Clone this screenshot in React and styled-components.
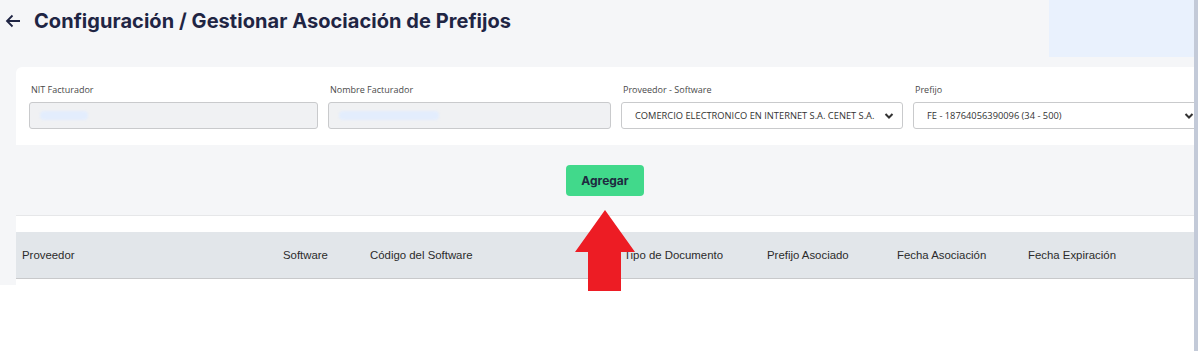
import React from "react";
import styled, { createGlobalStyle } from "styled-components";

const GlobalStyle = createGlobalStyle`
  html, body {
    margin: 0;
    padding: 0;
    background: #ffffff;
    overflow: hidden;
  }
  * {
    box-sizing: border-box;
  }
`;

const Screen = styled.div`
  display: flex;
  flex-direction: row;
  width: 1198px;
  height: 351px;
  position: relative;
`;

const Page = styled.div`
  flex: 1;
  min-width: 0;
  overflow: hidden;
`;

const Scrollbar = styled.div`
  width: 4px;
  background: #c3cad8;
`;

const Top = styled.div`
  display: flex;
  flex-direction: row;
  justify-content: space-between;
  background: #f5f6f8;
  height: 67px;
`;

const TitleRow = styled.div`
  display: flex;
  flex-direction: row;
  align-items: center;
  height: 42px;
  padding-left: 5px;
  gap: 13px;
  h1 {
    margin: 0;
    font-family: Inter, Roboto, "Liberation Sans", sans-serif;
    font-weight: 700;
    font-size: 20px;
    letter-spacing: 0.05px;
    color: #1f2544;
  }
`;

const UserBox = styled.div`
  width: 145px;
  height: 57px;
  background: #e9f1fd;
`;

const Body = styled.div`
  background: #f5f6f8;
  padding-left: 16px;
  height: 218px;
  display: flex;
  flex-direction: column;
`;

const Card = styled.div`
  background: #ffffff;
  border-top-left-radius: 6px;
  height: 78px;
  padding: 16px 0 0 13px;
  display: grid;
  grid-template-columns: 289px 283px 282px 290px;
  column-gap: 10px;
`;

const Field = styled.div`
  display: flex;
  flex-direction: column;
  gap: 6px;
  label {
    font-family: "Open Sans", "Noto Sans", sans-serif;
    font-size: 9px;
    color: #4a4a4a;
    line-height: 13px;
    padding-left: 2px;
  }
`;

const Input = styled.div`
  height: 27px;
  border: 1px solid #c9cacc;
  border-radius: 3px;
  background: ${(p) => (p.$disabled ? "#f0f1f3" : "#ffffff")};
  display: flex;
  align-items: center;
  justify-content: space-between;
  padding: 0 8px 0 13px;
  font-family: "Open Sans", "Noto Sans", sans-serif;
  font-size: 9.3px;
  color: #333333;
  white-space: nowrap;
`;

const Blur = styled.span`
  display: block;
  width: ${(p) => p.$w}px;
  height: 9px;
  margin-left: ${(p) => p.$off}px;
  background: #e3edfd;
  border-radius: 4px;
  filter: blur(1px);
`;

const Actions = styled.div`
  height: 71px;
  display: flex;
  justify-content: center;
  align-items: center;
  border-bottom: 1px solid #e6e7e9;
`;

const Button = styled.button`
  width: 78px;
  height: 31px;
  border: none;
  border-radius: 4px;
  background: #41d98b;
  color: #1e2a40;
  font-family: Inter, Roboto, "Liberation Sans", sans-serif;
  font-weight: 700;
  font-size: 12px;
  margin-top: 1px;
`;

const TableArea = styled.div`
  background: #ffffff;
  padding-top: 16px;
  flex: 1;
`;

const HeaderRow = styled.div`
  height: 47px;
  background: #e2e6ea;
  border-bottom: 1px solid #c8c9cb;
  display: flex;
  align-items: center;
  font-family: "Liberation Sans", Arial, sans-serif;
  font-size: 11.4px;
  color: #2b2b2b;
`;

const Col = styled.div`
  width: ${(p) => p.$w}px;
  flex-shrink: 0;
  white-space: nowrap;
`;

const ArrowMark = styled.svg`
  position: absolute;
  left: 574px;
  top: 210px;
`;

const Chevron = () => (
  <svg width="10" height="8" viewBox="0 0 10 8">
    <path d="M1.5 2 L5 5.5 L8.5 2" fill="none" stroke="#333" strokeWidth="2" />
  </svg>
);

const columns = [
  ["Proveedor", 267],
  ["Software", 87],
  ["Código del Software", 254],
  ["Tipo de Documento", 143],
  ["Prefijo Asociado", 130],
  ["Fecha Asociación", 131],
  ["Fecha Expiración", 150],
];

export default function App() {
  return (
    <>
      <GlobalStyle />
      <Screen>
        <Page>
          <Top>
            <TitleRow>
              <svg width="16" height="14" viewBox="0 0 16 14">
                <path d="M15 7 H2 M7.5 1.5 L2 7 L7.5 12.5" fill="none" stroke="#1f2544" strokeWidth="1.8" />
              </svg>
              <h1>Configuración / Gestionar Asociación de Prefijos</h1>
            </TitleRow>
            <UserBox />
          </Top>
          <Body>
            <Card>
              <Field>
                <label>NIT Facturador</label>
                <Input $disabled>
                  <Blur $w={48} $off={-3} />
                </Input>
              </Field>
              <Field>
                <label>Nombre Facturador</label>
                <Input $disabled>
                  <Blur $w={100} $off={-3} />
                </Input>
              </Field>
              <Field>
                <label>Proveedor - Software</label>
                <Input>
                  <span>COMERCIO ELECTRONICO EN INTERNET S.A. CENET S.A.</span>
                  <Chevron />
                </Input>
              </Field>
              <Field>
                <label>Prefijo</label>
                <Input>
                  <span>FE - 18764056390096 (34 - 500)</span>
                  <Chevron />
                </Input>
              </Field>
            </Card>
            <Actions>
              <Button>Agregar</Button>
            </Actions>
            <TableArea>
              <HeaderRow>
                {columns.map(([name, w], i) => (
                  <Col key={name} $w={w} style={i === 0 ? { paddingLeft: 6 } : undefined}>
                    {name}
                  </Col>
                ))}
              </HeaderRow>
            </TableArea>
          </Body>
        </Page>
        <Scrollbar />
        <ArrowMark width="62" height="82" viewBox="0 0 62 82">
          <path d="M31 0 L61 42 L47 42 L47 81 L14 81 L14 42 L1 42 Z" fill="#ed1c24" />
        </ArrowMark>
      </Screen>
    </>
  );
}
